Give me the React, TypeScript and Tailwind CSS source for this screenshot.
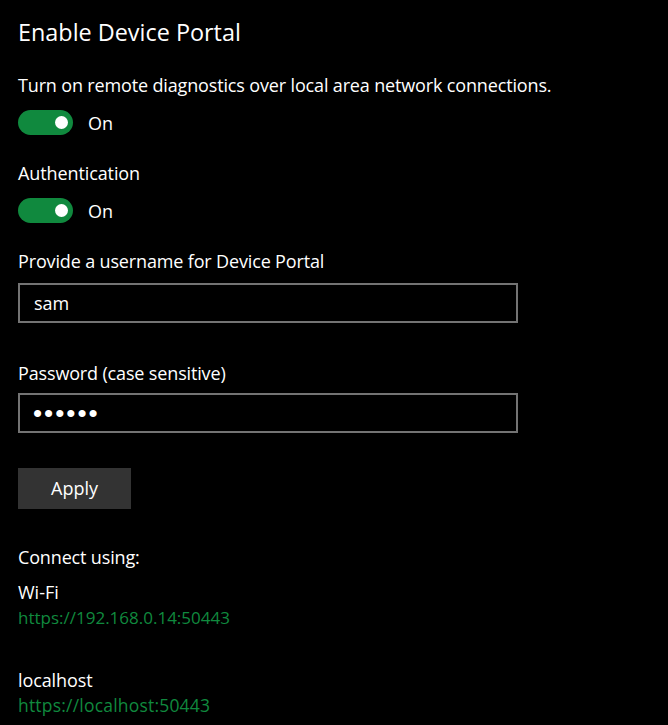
import { useState } from "react";

function Toggle({ on, onChange }: { on: boolean; onChange: (v: boolean) => void }) {
  return (
    <div className="mt-[13px] flex h-[25px] items-center">
      <button
        onClick={() => onChange(!on)}
        className={`flex h-[25px] w-[55px] items-center rounded-full px-[5px] ${
          on ? "justify-end bg-[#10893e]" : "justify-start border-2 border-white bg-black"
        }`}
      >
        <span className="block h-[13px] w-[13px] rounded-full bg-white" />
      </button>
      <span className="ml-[15px] text-[18px] leading-[24px] text-white">{on ? "On" : "Off"}</span>
    </div>
  );
}

export default function App() {
  const [portal, setPortal] = useState(true);
  const [auth, setAuth] = useState(true);
  const [user, setUser] = useState("sam");
  const [pass, setPass] = useState("secret");

  return (
    <div
      className="min-h-[725px] bg-black pl-[18px] pt-[16px] text-white"
      style={{ fontFamily: '"Open Sans", "Noto Sans", sans-serif' }}
    >
      <h1 className="text-[23.4px] font-normal leading-[32px]">Enable Device Portal</h1>

      <p className="mt-[25px] text-[18px] leading-[24px] tracking-[-0.15px]">
        Turn on remote diagnostics over local area network connections.
      </p>
      <Toggle on={portal} onChange={setPortal} />

      <p className="mt-[26px] text-[18px] leading-[24px] tracking-[-0.1px]">Authentication</p>
      <Toggle on={auth} onChange={setAuth} />

      <p className="mt-[26px] text-[18px] leading-[24px] tracking-[-0.15px]">
        Provide a username for Device Portal
      </p>
      <input
        value={user}
        onChange={(e) => setUser(e.target.value)}
        className="mt-[10px] block h-[40px] w-[500px] border-2 border-[#737373] bg-black px-[14px] text-[18px] text-white outline-none"
      />

      <p className="mt-[38px] text-[18px] leading-[24px] tracking-[-0.15px]">Password (case sensitive)</p>
      <input
        type="password"
        value={pass}
        onChange={(e) => setPass(e.target.value)}
        className="mt-[8px] block h-[40px] w-[500px] border-2 border-[#737373] bg-black px-[13px] font-['Liberation_Sans'] text-[26px] tracking-[2px] text-white outline-none"
      />

      <button className="mt-[35px] block h-[41px] w-[113px] bg-[#333333] text-[18px] text-white">
        Apply
      </button>

      <p className="mt-[36px] text-[18px] leading-[24px] tracking-[-0.15px]">Connect using:</p>
      <p className="mt-[11px] text-[18px] leading-[24px]">Wi-Fi</p>
      <a className="mt-[2px] block text-[17px] leading-[24px] text-[#10893e]" href="#">
        https://192.168.0.14:50443
      </a>
      <p className="mt-[38px] text-[18px] leading-[24px] tracking-[-0.1px]">localhost</p>
      <a className="mt-[1px] block text-[17.5px] leading-[24px] tracking-[0.2px] text-[#10893e]" href="#">
        https://localhost:50443
      </a>
    </div>
  );
}
